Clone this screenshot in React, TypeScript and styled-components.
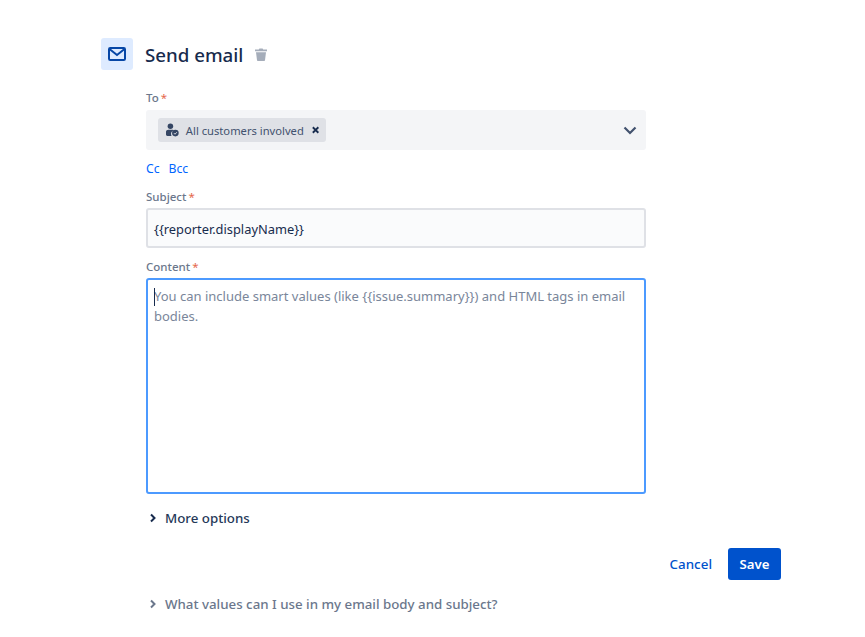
import React from "react";
import styled, { createGlobalStyle } from "styled-components";

const Global = createGlobalStyle`
  html, body { margin: 0; padding: 0; background: #fff; }
  body { font-family: "Noto Sans", "Open Sans", "Liberation Sans", sans-serif; color: #172b4d; }
`;

const Page = styled.div`
  width: 865px;
  height: 637px;
  overflow: hidden;
  box-sizing: border-box;
  padding: 38px 84px 0 101px;
`;

const Header = styled.header`
  display: flex;
  align-items: center;
  height: 32px;
`;

const IconTile = styled.div`
  width: 32px;
  height: 32px;
  border-radius: 3px;
  background: #deebff;
  display: flex;
  align-items: center;
  justify-content: center;
`;

const Title = styled.h2`
  margin: 2px 0 0 12px;
  font-size: 18.7px;
  font-weight: 500;
  line-height: 32px;
  color: #172b4d;
`;

const TrashButton = styled.span`
  display: flex;
  margin-left: 12px;
`;

const Form = styled.div`
  width: 500px;
  margin-left: 45px;
  padding-top: 20px;
`;

const Label = styled.label`
  display: block;
  font-size: 11.5px;
  font-weight: 500;
  line-height: 16px;
  color: #6b778c;
`;

const Star = styled.span`
  color: #e5684c;
  font-weight: 400;
  margin-left: 2px;
`;

const SelectBox = styled.div`
  margin-top: 4px;
  height: 40px;
  border-radius: 3px;
  background: #f4f5f7;
  display: flex;
  align-items: center;
  justify-content: space-between;
  padding: 0 9px 0 12px;
`;

const Tag = styled.div`
  height: 24px;
  width: 168px;
  box-sizing: border-box;
  background: #dfe1e6;
  border-radius: 3px;
  display: flex;
  align-items: center;
  padding: 0 6px 0 8px;
  font-size: 11.2px;
  color: #42526e;
`;

const TagText = styled.span`
  margin: 0 7px 0 7px;
  white-space: nowrap;
`;

const LinkRow = styled.div`
  display: flex;
  gap: 9px;
  margin-top: 10px;
  font-size: 12.2px;
  line-height: 18px;
  color: #0065ff;
`;

const SpacedLabel = styled(Label)<{ $top: number }>`
  margin-top: ${(p) => p.$top}px;
`;

const SubjectInput = styled.div`
  margin-top: 3px;
  height: 40px;
  box-sizing: border-box;
  border: 2px solid #dfe1e6;
  border-radius: 3px;
  background: #fafbfc;
  padding: 1px 6px 0;
  display: flex;
  align-items: center;
  font-size: 12.85px;
  color: #172b4d;
`;

const TextArea = styled.div`
  position: relative;
  margin-top: 3px;
  height: 216px;
  box-sizing: border-box;
  border: 2px solid #4c9aff;
  border-radius: 3px;
  background: #fff;
  padding: 6px 6px;
  font-size: 13px;
  line-height: 20px;
  color: #7a869a;
`;

const Caret = styled.span`
  position: absolute;
  left: 6px;
  top: 8px;
  width: 1px;
  height: 18px;
  background: #172b4d;
`;

const Expander = styled.div<{ $muted?: boolean }>`
  display: flex;
  align-items: center;
  gap: 8px;
  margin-left: 3px;
  font-size: 13.3px;
  font-weight: 500;
  line-height: 20px;
  color: ${(p) => (p.$muted ? "#6b778c" : "#253858")};
`;

const MoreRow = styled.div`
  margin-top: 14px;
`;

const Actions = styled.div`
  display: flex;
  justify-content: flex-end;
  align-items: center;
  gap: 16px;
  margin-top: 20px;
  width: 680px;
`;

const CancelLink = styled.span`
  font-size: 13.4px;
  font-weight: 500;
  color: #0052cc;
`;

const SaveButton = styled.button`
  width: 53px;
  height: 32px;
  border: 0;
  border-radius: 3px;
  background: #0052cc;
  color: #fff;
  font: 600 13.2px "Noto Sans", sans-serif;
  padding: 0;
`;

const HelpRow = styled.div`
  margin: 14px 0 0 45px;
`;

const Chevron = ({ color }: { color: string }) => (
  <svg width="8" height="10" viewBox="0 0 8 10" fill="none">
    <path d="M2 1.5 5.5 5 2 8.5" stroke={color} strokeWidth="2" />
  </svg>
);

export default function App() {
  return (
    <Page>
      <Global />
      <Header>
        <IconTile>
          <svg width="18" height="14" viewBox="0 0 18 14" fill="none">
            <rect x="1" y="1" width="16" height="12" rx="1.2" stroke="#0747a6" strokeWidth="2" />
            <path d="M1.5 2 9 8l7.5-6" stroke="#0747a6" strokeWidth="2" />
          </svg>
        </IconTile>
        <Title>Send email</Title>
        <TrashButton>
          <svg width="12" height="13" viewBox="0 0 12 13" fill="#a5adba">
            <path d="M0 1.6h3.8L4.4.4h3.2l.6 1.2H12v1.6H0z" />
            <path d="M1 4.2h10l-1 8.1a.8.8 0 0 1-.8.7H2.8a.8.8 0 0 1-.8-.7z" />
          </svg>
        </TrashButton>
      </Header>
      <Form>
        <Label>To<Star>*</Star></Label>
        <SelectBox>
          <Tag>
            <svg width="14" height="14" viewBox="0 0 14 14">
              <circle cx="4.8" cy="3" r="3" fill="#344563" />
              <path d="M0 9C0 7.4 1.2 6.6 2.6 6.6h4.6c.8 0 1.3.2 1.7.6A4.2 4.2 0 0 0 6 13.4H1.6C.6 13.4 0 12.8 0 12z" fill="#344563" />
              <circle cx="10.2" cy="10.4" r="3.6" fill="#344563" />
              <path d="M8.6 10.4l1.2 1.2 2-2.2" stroke="#dfe1e6" strokeWidth="1" fill="none" />
            </svg>
            <TagText>All customers involved</TagText>
            <svg width="10" height="10" viewBox="0 0 10 10">
              <path d="M2 2l6 6M8 2 2 8" stroke="#172b4d" strokeWidth="2" />
            </svg>
          </Tag>
          <svg width="14" height="9" viewBox="0 0 14 9" fill="none">
            <path d="M1.5 1.5 7 7l5.5-5.5" stroke="#42526e" strokeWidth="2.2" />
          </svg>
        </SelectBox>
        <LinkRow><span>Cc</span><span>Bcc</span></LinkRow>
        <SpacedLabel $top={11}>Subject<Star>*</Star></SpacedLabel>
        <SubjectInput>{"{{reporter.displayName}}"}</SubjectInput>
        <SpacedLabel $top={11}>Content<Star>*</Star></SpacedLabel>
        <TextArea>
          <Caret />
          {"You can include smart values (like {{issue.summary}}) and HTML tags in email bodies."}
        </TextArea>
        <MoreRow>
          <Expander><Chevron color="#172b4d" />More options</Expander>
        </MoreRow>
      </Form>
      <Actions>
        <CancelLink>Cancel</CancelLink>
        <SaveButton>Save</SaveButton>
      </Actions>
      <HelpRow>
        <Expander $muted><Chevron color="#6b778c" />What values can I use in my email body and subject?</Expander>
      </HelpRow>
    </Page>
  );
}
